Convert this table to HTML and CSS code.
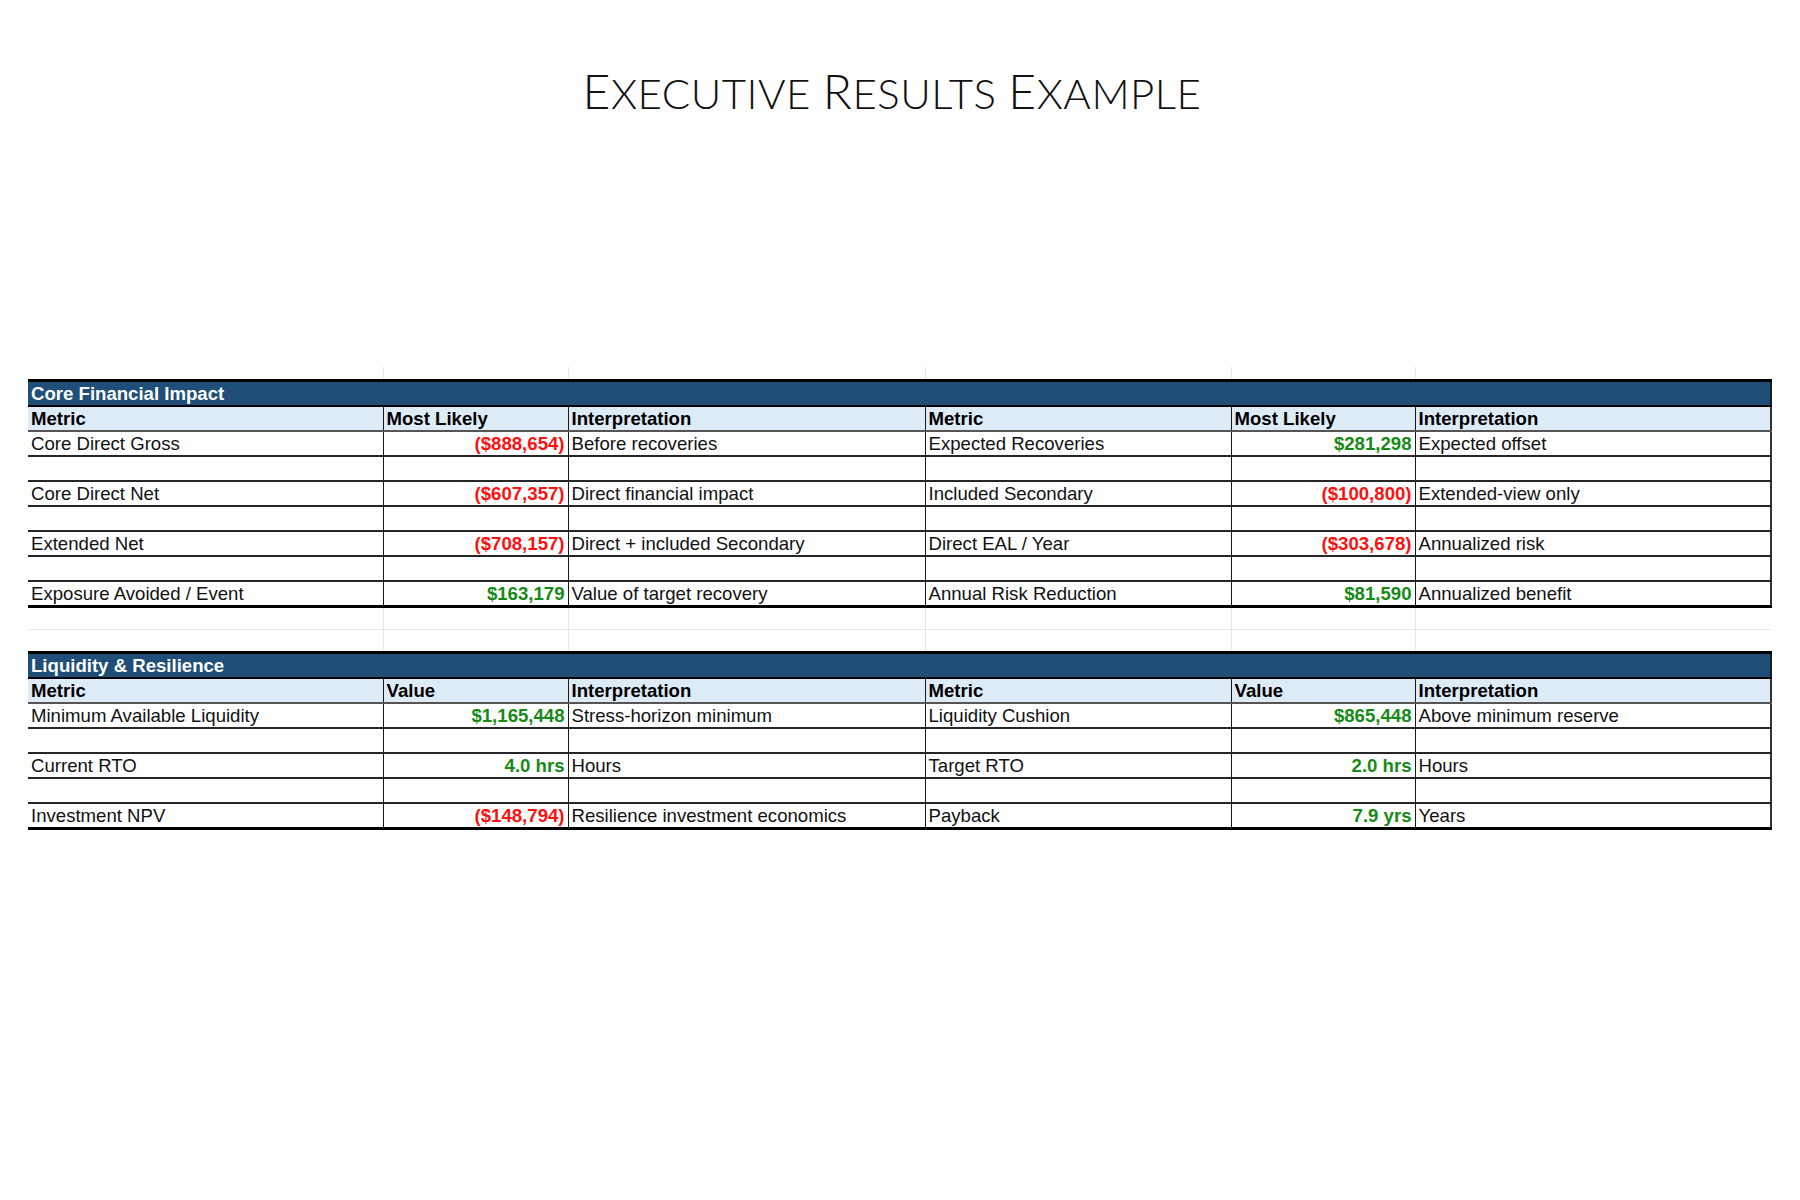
FILE: index.html
```html
<!DOCTYPE html>
<html lang="en">
<head>
<meta charset="utf-8">
<title>Executive Results Example</title>
<link rel="stylesheet" href="styles.css">
</head>
<body>
<h1 class="title"><span class="cap">E</span>XECUTIVE <span class="cap">R</span>ESULTS <span class="cap">E</span>XAMPLE</h1>
<table class="sheet">
  <colgroup>
    <col class="c1"><col class="c2"><col class="c3"><col class="c4"><col class="c5"><col class="c6">
  </colgroup>
  <tbody>
    <tr class="gap top-gap"><td></td><td></td><td></td><td></td><td></td><td></td></tr>

    <tr class="bar"><td colspan="6">Core Financial Impact</td></tr>
    <tr class="head"><td>Metric</td><td>Most Likely</td><td>Interpretation</td><td>Metric</td><td>Most Likely</td><td>Interpretation</td></tr>
    <tr class="row"><td>Core Direct Gross</td><td class="num neg">($888,654)</td><td>Before recoveries</td><td>Expected Recoveries</td><td class="num pos">$281,298</td><td>Expected offset</td></tr>
    <tr class="row"><td></td><td></td><td></td><td></td><td></td><td></td></tr>
    <tr class="row"><td>Core Direct Net</td><td class="num neg">($607,357)</td><td>Direct financial impact</td><td>Included Secondary</td><td class="num neg">($100,800)</td><td>Extended-view only</td></tr>
    <tr class="row"><td></td><td></td><td></td><td></td><td></td><td></td></tr>
    <tr class="row"><td>Extended Net</td><td class="num neg">($708,157)</td><td>Direct + included Secondary</td><td>Direct EAL / Year</td><td class="num neg">($303,678)</td><td>Annualized risk</td></tr>
    <tr class="row"><td></td><td></td><td></td><td></td><td></td><td></td></tr>
    <tr class="row last"><td>Exposure Avoided / Event</td><td class="num pos">$163,179</td><td>Value of target recovery</td><td>Annual Risk Reduction</td><td class="num pos">$81,590</td><td>Annualized benefit</td></tr>

    <tr class="gap mid-gap"><td></td><td></td><td></td><td></td><td></td><td></td></tr>
    <tr class="gap"><td></td><td></td><td></td><td></td><td></td><td></td></tr>

    <tr class="bar"><td colspan="6">Liquidity &amp; Resilience</td></tr>
    <tr class="head"><td>Metric</td><td>Value</td><td>Interpretation</td><td>Metric</td><td>Value</td><td>Interpretation</td></tr>
    <tr class="row"><td>Minimum Available Liquidity</td><td class="num pos">$1,165,448</td><td>Stress-horizon minimum</td><td>Liquidity Cushion</td><td class="num pos">$865,448</td><td>Above minimum reserve</td></tr>
    <tr class="row"><td></td><td></td><td></td><td></td><td></td><td></td></tr>
    <tr class="row"><td>Current RTO</td><td class="num pos">4.0 hrs</td><td>Hours</td><td>Target RTO</td><td class="num pos">2.0 hrs</td><td>Hours</td></tr>
    <tr class="row"><td></td><td></td><td></td><td></td><td></td><td></td></tr>
    <tr class="row last"><td>Investment NPV</td><td class="num neg">($148,794)</td><td>Resilience investment economics</td><td>Payback</td><td class="num pos">7.9 yrs</td><td>Years</td></tr>
  </tbody>
</table>
</body>
</html>
```
FILE: styles.css
```css
html, body {
  margin: 0;
  padding: 0;
  background: #ffffff;
}

body {
  width: 1800px;
  height: 1200px;
  overflow: hidden;
}

.title {
  margin: 0;
  padding-top: 67px;
  padding-right: 16px;
  height: 48px;
  line-height: 48px;
  text-align: center;
  font-family: Lato, "Open Sans", sans-serif;
  font-weight: 300;
  font-size: 42px;
  letter-spacing: 0.5px;
  color: #111111;
}

.title .cap {
  font-size: 48px;
}

.sheet {
  margin-top: 252px;
  margin-left: 28px;
  border-collapse: collapse;
  table-layout: fixed;
  width: 1743px;
  font-family: "Liberation Sans", Arial, sans-serif;
  font-size: 18.6px;
  color: #111111;
}

.c1 { width: 355px; }
.c2 { width: 185px; }
.c3 { width: 357px; }
.c4 { width: 306px; }
.c5 { width: 184px; }
.c6 { width: 356px; }

.sheet td {
  padding: 0 3px 1px 3px;
  vertical-align: bottom;
  line-height: 21px;
  white-space: nowrap;
  overflow: hidden;
}

/* faint spreadsheet grid outside the tables */
.gap td {
  height: 21px;
  padding: 0;
  border-right: 1px solid #e6e6e6;
}
.gap td:last-child {
  border-right: none;
}
.top-gap td {
  height: 12px;
}
.mid-gap td {
  border-bottom: 1px solid #e6e6e6;
}

/* section title bar */
.bar td {
  height: 22px;
  background: #1f4e79;
  color: #ffffff;
  font-weight: bold;
  border-top: 3px solid #000000;
  border-bottom: 2px solid #000000;
  border-right: 2px solid #1a1a1a;
}

/* column header row */
.head td {
  height: 22px;
  background: #ddebf7;
  font-weight: bold;
  color: #000000;
  border-right: 1px solid #1a1a1a;
  border-bottom: 2px solid #555555;
}
.head td:last-child {
  border-right: 2px solid #333333;
}

/* data rows */
.row td {
  height: 22px;
  border-right: 1px solid #1a1a1a;
  border-bottom: 2px solid #262626;
}
.row td:last-child {
  border-right: 2px solid #333333;
}
.row.last td {
  border-bottom: 3px solid #000000;
}

.num {
  text-align: right;
  font-weight: bold;
}
.neg {
  color: #ff1010;
}
.pos {
  color: #168a16;
}
```
